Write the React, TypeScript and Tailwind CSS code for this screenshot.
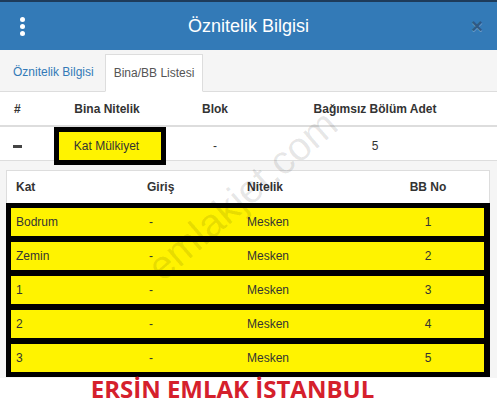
import React from "react";

const rows = [
  { kat: "Bodrum", no: "1" },
  { kat: "Zemin", no: "2" },
  { kat: "1", no: "3" },
  { kat: "2", no: "4" },
  { kat: "3", no: "5" },
];

export default function App() {
  return (
    <div className="relative w-[497px] h-[401px] overflow-hidden bg-white font-['Liberation_Sans',Arial,sans-serif] text-[12px] text-[#333]">
      <div className="h-[2px] bg-[#1e3b5a]" />
      <div className="h-[48px] bg-[#337ab7] flex items-center">
        <div className="w-[44px] flex flex-col items-center gap-[2px]">
          <span className="block w-[5px] h-[5px] rounded-full bg-white" />
          <span className="block w-[5px] h-[5px] rounded-full bg-white" />
          <span className="block w-[5px] h-[5px] rounded-full bg-white" />
        </div>
        <div className="flex-1 text-center text-white text-[18px] leading-none">Öznitelik Bilgisi</div>
        <div className="w-[44px] flex justify-end pr-[14px] text-[#2f5a84] text-[20px] font-bold leading-none [text-shadow:0_1px_0_rgba(255,255,255,0.3)]">×</div>
      </div>
      <div className="h-[42px] bg-[#f5f5f5] border-b border-[#ddd] flex items-end pl-[6px]">
        <div className="h-[38px] px-[7px] flex items-center text-[#337ab7]">Öznitelik Bilgisi</div>
        <div className="ml-[4px] h-[38px] px-[8px] flex items-center bg-white border border-[#ddd] border-b-white -mb-px text-[#555]">Bina/BB Listesi</div>
      </div>
      <div className="h-[35px] grid grid-cols-[54px_106px_110px_210px] items-center border-b-2 border-[#ddd] font-bold">
        <div className="pl-[14px]">#</div>
        <div className="text-center">Bina Nitelik</div>
        <div className="text-center">Blok</div>
        <div className="text-center">Bağımsız Bölüm Adet</div>
      </div>
      <div className="h-[34px] grid grid-cols-[54px_106px_110px_210px] items-center border-b border-[#ddd]">
        <div className="pl-[13px]">
          <span className="block w-[9px] h-[3px] bg-[#444]" />
        </div>
        <div className="self-end w-[112px] h-[38px] border-[5px] border-black bg-[#fff300] flex items-center justify-center pr-[7px]">Kat Mülkiyet</div>
        <div className="text-center">-</div>
        <div className="text-center">5</div>
      </div>
      <div className="h-[217px] bg-[#f5f5f5] px-[6px] pt-[9px]">
        <div className="w-[484px] h-[33px] bg-white border border-b-0 border-[#ddd] grid grid-cols-[131px_100px_131px_100px] items-center pl-[9px] font-bold">
          <div>Kat</div>
          <div>Giriş</div>
          <div>Nitelik</div>
          <div className="text-center">BB No</div>
        </div>
        <div className="w-[484px] h-[174px] bg-black pl-[5px] pr-[6px] py-[5px] flex flex-col gap-[6px]">
          {rows.map((r) => (
            <div key={r.no} className="h-[28px] bg-[#fff300] grid grid-cols-[131px_100px_131px_100px] items-center pl-[5px]">
              <div>{r.kat}</div>
              <div className="pl-[2px]">-</div>
              <div>Mesken</div>
              <div className="text-center">{r.no}</div>
            </div>
          ))}
        </div>
      </div>
      <div className="flex justify-center pr-[32px] text-[24px] leading-[22px] font-bold text-[#d5202c] font-['Open_Sans',Arial,sans-serif]">
        ERSİN EMLAK İSTANBUL
      </div>
      <div className="pointer-events-none absolute left-[242px] top-[195px] -translate-x-1/2 -translate-y-1/2 -rotate-[41deg] whitespace-nowrap text-[40px] leading-none text-black/10 font-['Liberation_Sans',Arial,sans-serif]">
        emlakjet.com
      </div>
    </div>
  );
}
